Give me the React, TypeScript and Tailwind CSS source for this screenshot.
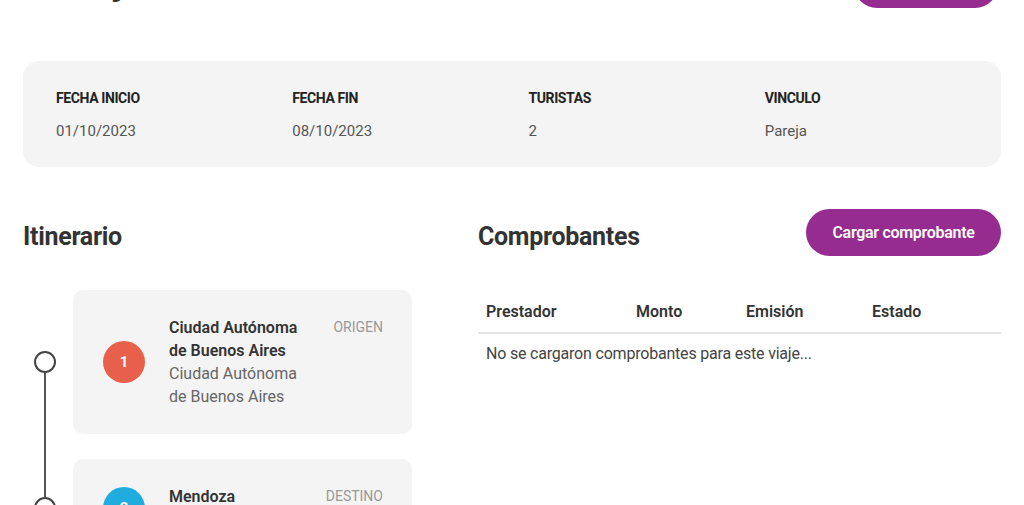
const info = [
  { label: 'FECHA INICIO', value: '01/10/2023' },
  { label: 'FECHA FIN', value: '08/10/2023' },
  { label: 'TURISTAS', value: '2' },
  { label: 'VINCULO', value: 'Pareja' },
]

const stops = [
  { n: 1, title: 'Ciudad Autónoma de Buenos Aires', sub: 'Ciudad Autónoma de Buenos Aires', tag: 'ORIGEN', color: 'bg-[#e8604c]' },
  { n: 2, title: 'Mendoza', sub: 'Mendoza', tag: 'DESTINO', color: 'bg-[#21acdf]' },
]

export default function App() {
  return (
    <div className="min-h-screen bg-white px-[23px] text-[#333]" style={{ fontFamily: 'Roboto, "Noto Sans", sans-serif' }}>
      {/* header, scrolled mostly out of view */}
      <div className="flex items-end justify-between -mt-[41px] h-[48px]">
        <h1 className="text-[34px] font-bold leading-[48px] text-[#333]">Mi viaje</h1>
        <button className="h-[46px] w-[144px] rounded-full bg-[#962c8f] text-white font-semibold mr-[3px] mb-[-1px]">
          Editar viaje
        </button>
      </div>

      {/* datos del viaje */}
      <div className="mt-[54px] h-[106px] rounded-[16px] bg-[#f4f4f4] pl-[33px] pt-[28px] grid grid-cols-4">
        {info.map(i => (
          <div key={i.label}>
            <div className="text-[14px] font-bold tracking-[-0.4px] text-[#222] leading-[18px]">{i.label}</div>
            <div className="mt-[14px] text-[15px] text-[#555] leading-[20px]">{i.value}</div>
          </div>
        ))}
      </div>

      <div className="mt-[42px] flex">
        {/* itinerario */}
        <div className="w-[455px] shrink-0">
          <h2 className="text-[25px] font-bold h-[52px] pt-[4px] flex items-center text-[#333] tracking-[-0.3px]">Itinerario</h2>
          <div className="mt-[29px] flex flex-col gap-[25px]">
            {stops.map((s, idx) => (
              <div key={s.n} className="flex items-stretch">
                <div className="relative w-[50px] shrink-0 flex items-center">
                  <div className="ml-[11px] h-[22px] w-[22px] rounded-full border-2 border-[#444] bg-white" />
                  {idx < stops.length - 1 && (
                    <div className="absolute left-[21px] top-[calc(50%+11px)] w-[2px] h-[124px] bg-[#555]" />
                  )}
                </div>
                <div className="w-[339px] rounded-[10px] bg-[#f4f4f4] flex items-center pl-[30px] pr-[29px] py-[26px]">
                  <div className={`w-[42px] h-[42px] rounded-full shrink-0 flex items-center justify-center text-white font-bold text-[15px] ${s.color}`}>
                    {s.n}
                  </div>
                  <div className="ml-[24px] w-[130px] leading-[23px] text-[16px]">
                    <div className="font-semibold text-[#333]">{s.title}</div>
                    <div className="text-[#666]">{s.sub}</div>
                  </div>
                  <div className="ml-auto self-start text-[14px] text-[#999] leading-[23px]">{s.tag}</div>
                </div>
              </div>
            ))}
          </div>
        </div>

        {/* comprobantes */}
        <div className="flex-1">
          <div className="flex items-center justify-between h-[52px]">
            <h2 className="text-[25px] font-bold pt-[4px] text-[#333] tracking-[-0.3px]">Comprobantes</h2>
            <button className="-mt-[5px] h-[47px] w-[195px] rounded-full bg-[#962c8f] text-white text-[16px] font-semibold tracking-[-0.3px]">
              Cargar comprobante
            </button>
          </div>
          <div className="mt-[40px] grid grid-cols-[150px_110px_126px_1fr] px-[8px] pb-[9px] border-b-2 border-[#e4e4e4] text-[16px] font-semibold text-[#333] leading-[22px]">
            <div>Prestador</div>
            <div>Monto</div>
            <div>Emisión</div>
            <div>Estado</div>
          </div>
          <div className="px-[8px] pt-[9px] text-[16px] text-[#444] leading-[22px] tracking-[-0.2px]">
            No se cargaron comprobantes para este viaje...
          </div>
        </div>
      </div>
    </div>
  )
}
